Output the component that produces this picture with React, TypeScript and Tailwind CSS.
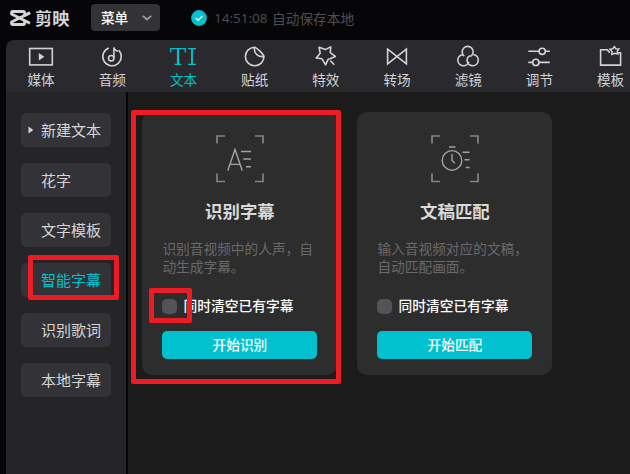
import React from "react";

const stroke = { fill: "none", stroke: "currentColor", strokeWidth: 1.6 } as const;

const tabs: { label: string; icon: React.ReactNode; active?: boolean }[] = [
  {
    label: "媒体",
    icon: (
      <>
        <rect x="1.7" y="4.5" width="22.6" height="16.4" {...stroke} />
        <path d="M10.8 9v7.4l5.6-3.7z" fill="currentColor" />
      </>
    ),
  },
  {
    label: "音频",
    icon: (
      <g {...stroke}>
        <path d="M9.8 3.9A9.2 9.2 0 1 0 19.8 6.3" />
        <circle cx="12.2" cy="14.2" r="2.7" />
        <path d="M14.9 14.2V3.4c.2 2.2 1.4 3.2 4.2 3.8" />
      </g>
    ),
  },
  {
    label: "文本",
    active: true,
    icon: (
      <g {...stroke} strokeWidth="1.3">
        <path d="M.7 8.4V4.6h14.6v3.8M4.7 20.4h6.6" />
        <path d="M8 4.6v15.8" strokeWidth="2.2" />
        <path d="M18 4.6h8M18 20.4h8" />
        <path d="M22 4.6v15.8" strokeWidth="1.9" />
      </g>
    ),
  },
  {
    label: "贴纸",
    icon: (
      <g {...stroke}>
        <path d="M12.3 3.2A9.3 9.3 0 1 0 22 12.6C21.6 10.3 14.8 3.5 12.3 3.2z" />
        <path d="M12.3 3.2c-.5 6.8 4 9.8 9.7 9.4" />
      </g>
    ),
  },
  {
    label: "特效",
    icon: (
      <g {...stroke} strokeLinejoin="round">
        <path d="M17 14.8 22.3 12.4 17.3 8.6 17.7 2.9 12.3 5.6 6 3.3 7.2 9.2 3.2 14 9 14.8 12.6 20.8 15.2 15.2z" />
        <path d="m17.3 16.6 4 4.2" />
      </g>
    ),
  },
  { label: "转场", icon: <path d="M3.6 5.2v14.6L22.4 5.2v14.6z" {...stroke} /> },
  {
    label: "滤镜",
    icon: (
      <g {...stroke}>
        <path d="M9.3 12.2a5.5 5.5 0 1 1 6.2.4" />
        <path d="M7.8 10.6a5.6 5.6 0 1 0 6 7.1" />
        <path d="M18.5 10.6a5.6 5.6 0 1 1-6.4 6.1c-.3-2.4 1-4.3 3.4-5" />
      </g>
    ),
  },
  {
    label: "调节",
    icon: (
      <g {...stroke}>
        <path d="M2.3 7.3H13M19.4 7.3h4.4M2.3 18.4h4.3M13 18.4h10.8" />
        <circle cx="16.2" cy="7.3" r="3.1" />
        <circle cx="9.8" cy="18.4" r="3.1" />
      </g>
    ),
  },
  {
    label: "模板",
    icon: (
      <g {...stroke}>
        <path d="M11.8 8.6 9.2 5.8H2.6v15.3h20V8.7h-3" />
        <path d="m16.4 2.6 1.5 2.2 3 .1-1.7 2.5.6 2.6-3-.8-2.9 1.1v-3L12 5.3l2.9-.6z" strokeWidth="1.5" />
      </g>
    ),
  },
];

const sideItems = ["新建文本", "花字", "文字模板", "智能字幕", "识别歌词", "本地字幕"];

const letterGlyph = <path d="M12.8 36.5 20 15.4 27.2 36.5M15 30.4h10.5M26 17.5h10M28.3 25h7.6M31 32.8h5" />;

const timerGlyph = (
  <>
    <circle cx="22" cy="26.4" r="9.8" />
    <path d="M19 13h6.4M22 20v6.5l3 2.8M32.5 18.2h7M34.5 25.8h5M35.8 33.5h3.7" />
  </>
);

function Highlight({ className }: { className: string }) {
  return <div className={`pointer-events-none absolute rounded-[2px] border-[5px] border-[#ed1c24] ${className}`} />;
}

function Card({
  title,
  description,
  action,
  glyph,
  children,
}: {
  title: string;
  description: string;
  action: string;
  glyph: React.ReactNode;
  children?: React.ReactNode;
}) {
  return (
    <section className="relative flex h-[263px] w-[195px] shrink-0 flex-col rounded-[10px] bg-[#2d2d2d] px-5 pt-[22px]">
      <svg width="50" height="50" viewBox="0 0 50 50" className="ml-[53px] shrink-0" fill="none" stroke="#a2a2a3" strokeWidth="1.4">
        <path d="M2 9.5V2h8M40 2h8v7.5M2 39.5v8h8M40 47.5h8v-8" stroke="#858586" strokeWidth="1.7" />
        {glyph}
      </svg>
      <h2 className="mt-[15px] text-center text-[17.4px] leading-6 font-bold text-[#d9d9da]">{title}</h2>
      <p className="mt-4 h-9 text-[13.7px] leading-[18px] text-[#69696a]">{description}</p>
      <label className="mt-[19px] flex h-6 items-center gap-[6px] text-[13.75px] font-medium whitespace-nowrap text-white">
        <span className="h-[15px] w-[15px] rounded-[5px] bg-[#53535a]" />
        <span className="-mt-px">同时清空已有字幕</span>
      </label>
      <button className="mt-[13px] h-7 w-[155px] shrink-0 rounded-[5px] bg-[#00c1cd] pb-px text-[13.7px] font-medium text-white">
        {action}
      </button>
      {children}
    </section>
  );
}

export default function App() {
  return (
    <div className="flex h-[474px] w-[630px] flex-col overflow-hidden bg-[#060608] font-['Noto_Sans_CJK_SC',sans-serif]">
      <header className="flex h-10 shrink-0 items-start">
        <div className="flex h-[35px] w-[91px] items-center gap-1 pl-[10px] text-[#d6d6d7]">
          <svg width="21" height="16" viewBox="0 0 21 16" fill="none" stroke="currentColor" strokeWidth="2.8" strokeLinejoin="round">
            <path d="M20 2.8 14.6 5.6V3Q14.6 1.5 13 1.5H3Q1.5 1.5 1.5 3v1L20 13.2" />
            <path d="M20 2.8 1.5 12v1q0 1.5 1.5 1.5h10q1.6 0 1.6-1.5v-2.6" />
          </svg>
          <span className="text-[17.2px] leading-6 font-bold">剪映</span>
        </div>
        <button className="mt-1 flex h-[27px] w-[69px] items-center justify-between rounded-[4px] bg-[#333336] pr-2 pl-[10px] text-[13.6px] font-medium text-white">
          菜单
          <svg width="10" height="6" viewBox="0 0 10 6" fill="none" stroke="#9c9c9e" strokeWidth="1.8">
            <path d="m.8.9 4.2 3.6L9.2.9" />
          </svg>
        </button>
        <div className="ml-[31px] flex h-[35px] items-center gap-[7px] text-[13.7px] whitespace-nowrap text-[#4e4e52]">
          <svg width="16" height="16" viewBox="0 0 16 16">
            <circle cx="8" cy="8" r="7.9" fill="#00c1cd" />
            <path d="m4.8 8 2.4 2.3 4.1-4.2" fill="none" stroke="white" strokeWidth="1.5" />
          </svg>
          <p className="flex gap-[5px]">
            <span className="w-[53px] font-['Open_Sans',sans-serif] text-[13.5px] leading-5">14:51:08</span>
            <span className="leading-5">自动保存本地</span>
          </p>
        </div>
      </header>

      <main className="ml-[6px] flex min-h-0 flex-1 flex-col overflow-hidden rounded-tl-[8px] bg-[#060608]">
        <nav className="flex h-[52px] shrink-0 bg-[#2a2a2e]">
          {tabs.map((tab) => (
            <div
              key={tab.label}
              className={`flex w-[71.2px] shrink-0 flex-col items-center pt-1 pr-px text-[13.6px] ${tab.active ? "text-[#00c1cd]" : "text-[#d3d3d5]"}`}
            >
              <svg width="26" height="25" viewBox="0 0 26 25" className="shrink-0 overflow-visible">
                {tab.icon}
              </svg>
              <span className="leading-5">{tab.label}</span>
            </div>
          ))}
        </nav>
        <div className="flex min-h-0 flex-1 gap-[2px]">
          <aside className="relative flex w-[120px] shrink-0 flex-col gap-4 bg-[#252527] px-[15px] pt-[21px]">
            {sideItems.map((item, index) => (
              <div
                key={item}
                className={`flex h-[34px] shrink-0 items-center rounded-[5px] bg-[#333337] text-[15px] whitespace-nowrap ${index === 3 ? "text-[#00c1cd]" : "text-[#d5d5d6]"}`}
              >
                <span className="flex w-5 shrink-0 pl-[7px]">
                  {index === 0 && (
                    <svg width="6" height="8" viewBox="0 0 6 8" fill="currentColor">
                      <path d="M.5.5v7L5.3 4z" />
                    </svg>
                  )}
                </span>
                {item}
              </div>
            ))}
            <Highlight className="top-[163px] left-[22px] h-[45px] w-[91px]" />
          </aside>
          <div className="flex flex-1 gap-5 bg-[#1b1b1b] pt-5 pl-[14.4px]">
            <Card title="识别字幕" description="识别音视频中的人声，自动生成字幕。" action="开始识别" glyph={letterGlyph}>
              <Highlight className="-top-[2px] -left-[11.4px] h-[274px] w-[210px]" />
              <Highlight className="top-[176px] left-[6.6px] h-[35px] w-[43px]" />
            </Card>
            <Card title="文稿匹配" description="输入音视频对应的文稿，自动匹配画面。" action="开始匹配" glyph={timerGlyph} />
          </div>
        </div>
      </main>
    </div>
  );
}
